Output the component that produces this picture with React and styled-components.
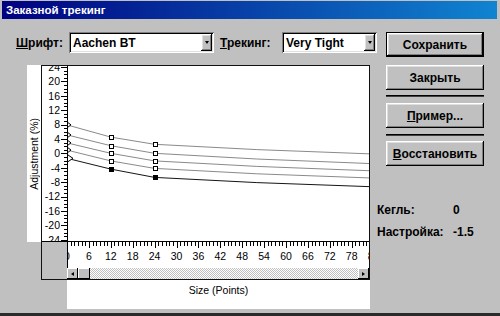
import React from 'react';
import styled, { createGlobalStyle } from 'styled-components';

const GlobalStyle = createGlobalStyle`
  html, body {
    margin: 0;
    padding: 0;
    background: #c0c0c0;
  }
  body {
    font-family: 'Liberation Sans', Arial, sans-serif;
  }
`;

const raised = 'inset -1px -1px #000, inset 1px 1px #fff, inset -2px -2px #808080, inset 2px 2px #dfdfdf';

const Window = styled.div`
  width: 500px;
  height: 316px;
  box-sizing: border-box;
  background: #c0c0c0;
  border-bottom: 3px solid #2a2a2a;
  display: flex;
  flex-direction: column;
  overflow: hidden;
`;

const TitleBar = styled.div`
  height: 18px;
  margin: 1px 3px 0 2px;
  padding-left: 4px;
  display: flex;
  align-items: center;
  background: linear-gradient(90deg, #000080, #1084d0);
  color: #fff;
  font-weight: bold;
  font-size: 11.5px;
`;

const Body = styled.div`
  display: flex;
  padding-top: 13px;
`;

const LeftPane = styled.div`
  width: 377px;
  display: flex;
  flex-direction: column;
`;

const ControlsRow = styled.div`
  display: flex;
  align-items: center;
  height: 21px;
  padding-left: 16px;
`;

const FieldLabel = styled.span`
  width: ${({ w }) => w}px;
  margin-left: ${({ ml }) => ml || 0}px;
  font-weight: bold;
  font-size: 12px;
  color: #000;
`;

const Select = styled.div`
  width: ${({ w }) => w}px;
  height: 21px;
  box-sizing: border-box;
  padding: 2px;
  display: flex;
  align-items: center;
  background: #fff;
  box-shadow: inset 1px 1px #808080, inset -1px -1px #fff, inset 2px 2px #000, inset -2px -2px #dfdfdf;
`;

const SelectText = styled.span`
  flex: 1;
  padding-left: 2px;
  font-weight: bold;
  font-size: 12px;
  color: #000;
`;

const DropButton = styled.div`
  width: 11px;
  height: 17px;
  box-sizing: border-box;
  display: flex;
  align-items: center;
  justify-content: center;
  background: #c0c0c0;
  box-shadow: ${raised};
  &::after {
    content: '';
    border-left: 2.5px solid transparent;
    border-right: 2.5px solid transparent;
    border-top: 3px solid #000;
  }
`;

const ChartGrid = styled.div`
  display: grid;
  grid-template-columns: 14px 329px;
  grid-template-rows: 177px 38px 29px;
  margin: 12px 0 0 27px;
`;

const YTitle = styled.div`
  background: #fff;
  display: flex;
  align-items: center;
  justify-content: center;
  span {
    writing-mode: vertical-rl;
    transform: rotate(180deg);
    white-space: nowrap;
    font-size: 10.5px;
    color: #000;
  }
`;

const ChartBox = styled.div`
  grid-column: 2;
  grid-row: 1 / span 2;
  box-sizing: border-box;
  border: 1px solid #111;
  background: #fff;
  display: flex;
  flex-direction: column;
`;

const ScrollRow = styled.div`
  display: flex;
  height: 11px;
`;

const ScrollCorner = styled.div`
  width: 25px;
  background: #c0c0c0;
`;

const ScrollTrack = styled.div`
  flex: 1;
  display: flex;
  background: repeating-conic-gradient(#c0c0c0 0 25%, #fff 0 50%) 0 0 / 2px 2px;
`;

const ScrollButton = styled.div`
  width: ${({ w }) => w || 11}px;
  height: 11px;
  box-sizing: border-box;
  display: flex;
  align-items: center;
  justify-content: center;
  background: #c0c0c0;
  box-shadow: inset -1px -1px #000, inset 1px 1px #fff;
  &::after {
    content: ${({ dir }) => (dir ? "''" : 'none')};
    border-top: 2.5px solid transparent;
    border-bottom: 2.5px solid transparent;
    ${({ dir }) => (dir === 'left' ? 'border-right: 3px solid #000;' : 'border-left: 3px solid #000;')}
  }
`;

const ScrollSpacer = styled.div`
  flex: 1;
`;

const XTitle = styled.div`
  grid-column: 2;
  grid-row: 3;
  margin-left: 26px;
  padding-top: 4px;
  background: #fff;
  text-align: center;
  font-size: 10.5px;
  color: #000;
`;

const RightPane = styled.div`
  width: 107px;
  display: flex;
  flex-direction: column;
`;

const Button = styled.button`
  width: 98px;
  height: 25px;
  margin: ${({ mt }) => mt || 0}px 0 0 9px;
  padding: 0;
  border: none;
  background: #c0c0c0;
  font-family: 'Liberation Sans', Arial, sans-serif;
  font-weight: bold;
  font-size: 12px;
  color: #000;
  box-shadow: ${({ isDefault }) =>
    isDefault
      ? 'inset 0 0 0 1px #000, inset -2px -2px #000, inset 2px 2px #fff, inset -3px -3px #808080, inset 3px 3px #dfdfdf'
      : raised};
`;

const Separator = styled.div`
  width: 98px;
  height: 2px;
  box-sizing: border-box;
  margin: ${({ mt }) => mt}px 0 0 9px;
  border-top: 1px solid #000;
  border-bottom: 1px solid #404040;
`;

const InfoGrid = styled.div`
  margin-top: 33px;
  display: grid;
  grid-template-columns: 76px auto;
  grid-auto-rows: 22px;
  align-items: center;
  font-weight: bold;
  font-size: 12px;
  color: #000;
`;

// chart geometry (svg coords, origin at the inner top-left of the box)
const X0 = 25;
const Y0 = 87.3;
const SX = 3.65;
const SY = 3.6;
const px = u => X0 + u * SX;
const py = v => Y0 - v * SY;

const CURVES = [
  { v: [7.9, 4.5, 2.5, -0.2], color: '#8a8a8a' },
  { v: [5.1, 2.1, 0, -2.9], color: '#8a8a8a' },
  { v: [2.9, 0, -2.1, -4.9], color: '#8a8a8a' },
  { v: [0.9, -2.1, -4.2, -6.9], color: '#8a8a8a' },
  { v: [-1.4, -4.4, -6.7, -9.3], color: '#151515', dark: true },
];

const range = (a, b) => Array.from({ length: b - a + 1 }, (_, i) => a + i);

const curvePath = v => {
  const mid = v[2] + 0.55 * (v[3] - v[2]);
  const pts = [
    [0, v[0]],
    [12, v[1]],
    [24, v[2]],
    [52, mid],
    [84, v[3]],
  ];
  return pts.map(([u, val], i) => `${i ? 'L' : 'M'}${px(u).toFixed(1)},${py(val).toFixed(1)}`).join(' ');
};

const Chart = () => (
  <svg width="327" height="202" style={{ display: 'block', fontFamily: "'Liberation Sans', Arial, sans-serif" }}>
    <defs>
      <clipPath id="plotClip">
        <rect x="25" y="0" width="302" height="176" />
      </clipPath>
    </defs>
    <rect width="327" height="202" fill="#fff" />

    {range(-24, 24).map(v => {
      const y = Math.round(py(v)) + 0.5;
      return (
        <line key={v} x1={v % 4 === 0 ? 19 : 22} x2="25" y1={y} y2={y} stroke="#000" shapeRendering="crispEdges" />
      );
    })}
    {range(-6, 6).map(i => (
      <text key={i} x="18" y={py(i * 4) + 3.8} fontSize="10.5" textAnchor="end" fill="#000">
        {i * 4}
      </text>
    ))}

    {range(0, 83).map(u => {
      const x = Math.round(px(u)) + 0.5;
      return (
        <line key={u} x1={x} x2={x} y1="176" y2={u % 6 === 0 ? 182 : 180} stroke="#000" shapeRendering="crispEdges" />
      );
    })}
    {range(0, 14).map(i => (
      <text key={i} x={px(i * 6)} y="194" fontSize="10.5" textAnchor="middle" fill="#000">
        {i * 6}
      </text>
    ))}

    <g clipPath="url(#plotClip)">
      {CURVES.map((c, i) => (
        <g key={i}>
          <path d={curvePath(c.v)} fill="none" stroke={c.color} strokeWidth="1" />
          {c.dark ? (
            <polygon
              points={`${px(0)},${py(c.v[0]) - 4} ${px(0) + 6},${py(c.v[0])} ${px(0)},${py(c.v[0]) + 4}`}
              fill="#fff"
              stroke="#000"
            />
          ) : (
            <polygon
              points={`${px(0)},${py(c.v[0]) - 3} ${px(0) + 4},${py(c.v[0])} ${px(0)},${py(c.v[0]) + 3}`}
              fill="#fff"
              stroke="#000"
            />
          )}
          {[12, 24].map(u => (
            <rect
              key={u}
              x={Math.round(px(u)) - 1.5}
              y={Math.round(py(c.v[u === 12 ? 1 : 2])) - 1.5}
              width="4"
              height="4"
              fill={c.dark ? '#000' : '#fff'}
              stroke="#000"
              strokeWidth="1"
            />
          ))}
        </g>
      ))}
    </g>

    <rect x="0" y="176" width="25" height="26" fill="#c0c0c0" />
    <line x1="25.5" x2="25.5" y1="0" y2="202" stroke="#000" shapeRendering="crispEdges" />
    <line x1="0" x2="327" y1="175.5" y2="175.5" stroke="#000" shapeRendering="crispEdges" />
  </svg>
);

const App = () => (
  <>
    <GlobalStyle />
    <Window>
      <TitleBar>Заказной трекинг</TitleBar>
      <Body>
        <LeftPane>
          <ControlsRow>
            <FieldLabel w={53}>
              <u>Ш</u>рифт:
            </FieldLabel>
            <Select w={145}>
              <SelectText>Aachen BT</SelectText>
              <DropButton />
            </Select>
            <FieldLabel w={62} ml={6}>
              <u>Т</u>рекинг:
            </FieldLabel>
            <Select w={95}>
              <SelectText>Very Tight</SelectText>
              <DropButton />
            </Select>
          </ControlsRow>

          <ChartGrid>
            <YTitle>
              <span>Adjustment (%)</span>
            </YTitle>
            <ChartBox>
              <Chart />
              <ScrollRow>
                <ScrollCorner />
                <ScrollTrack>
                  <ScrollButton dir="left" />
                  <ScrollButton w={12} />
                  <ScrollSpacer />
                  <ScrollButton dir="right" />
                </ScrollTrack>
              </ScrollRow>
            </ChartBox>
            <XTitle>Size (Points)</XTitle>
          </ChartGrid>
        </LeftPane>

        <RightPane>
          <Button isDefault>Сохранить</Button>
          <Button mt={8}>Закрыть</Button>
          <Separator mt={5} />
          <Button mt={6}>
            <u>П</u>ример...
          </Button>
          <Separator mt={6} />
          <Button mt={5}>
            <u>В</u>осстановить
          </Button>
          <InfoGrid>
            <span>Кегль:</span>
            <span>0</span>
            <span>Настройка:</span>
            <span>-1.5</span>
          </InfoGrid>
        </RightPane>
      </Body>
    </Window>
  </>
);

export default App;
